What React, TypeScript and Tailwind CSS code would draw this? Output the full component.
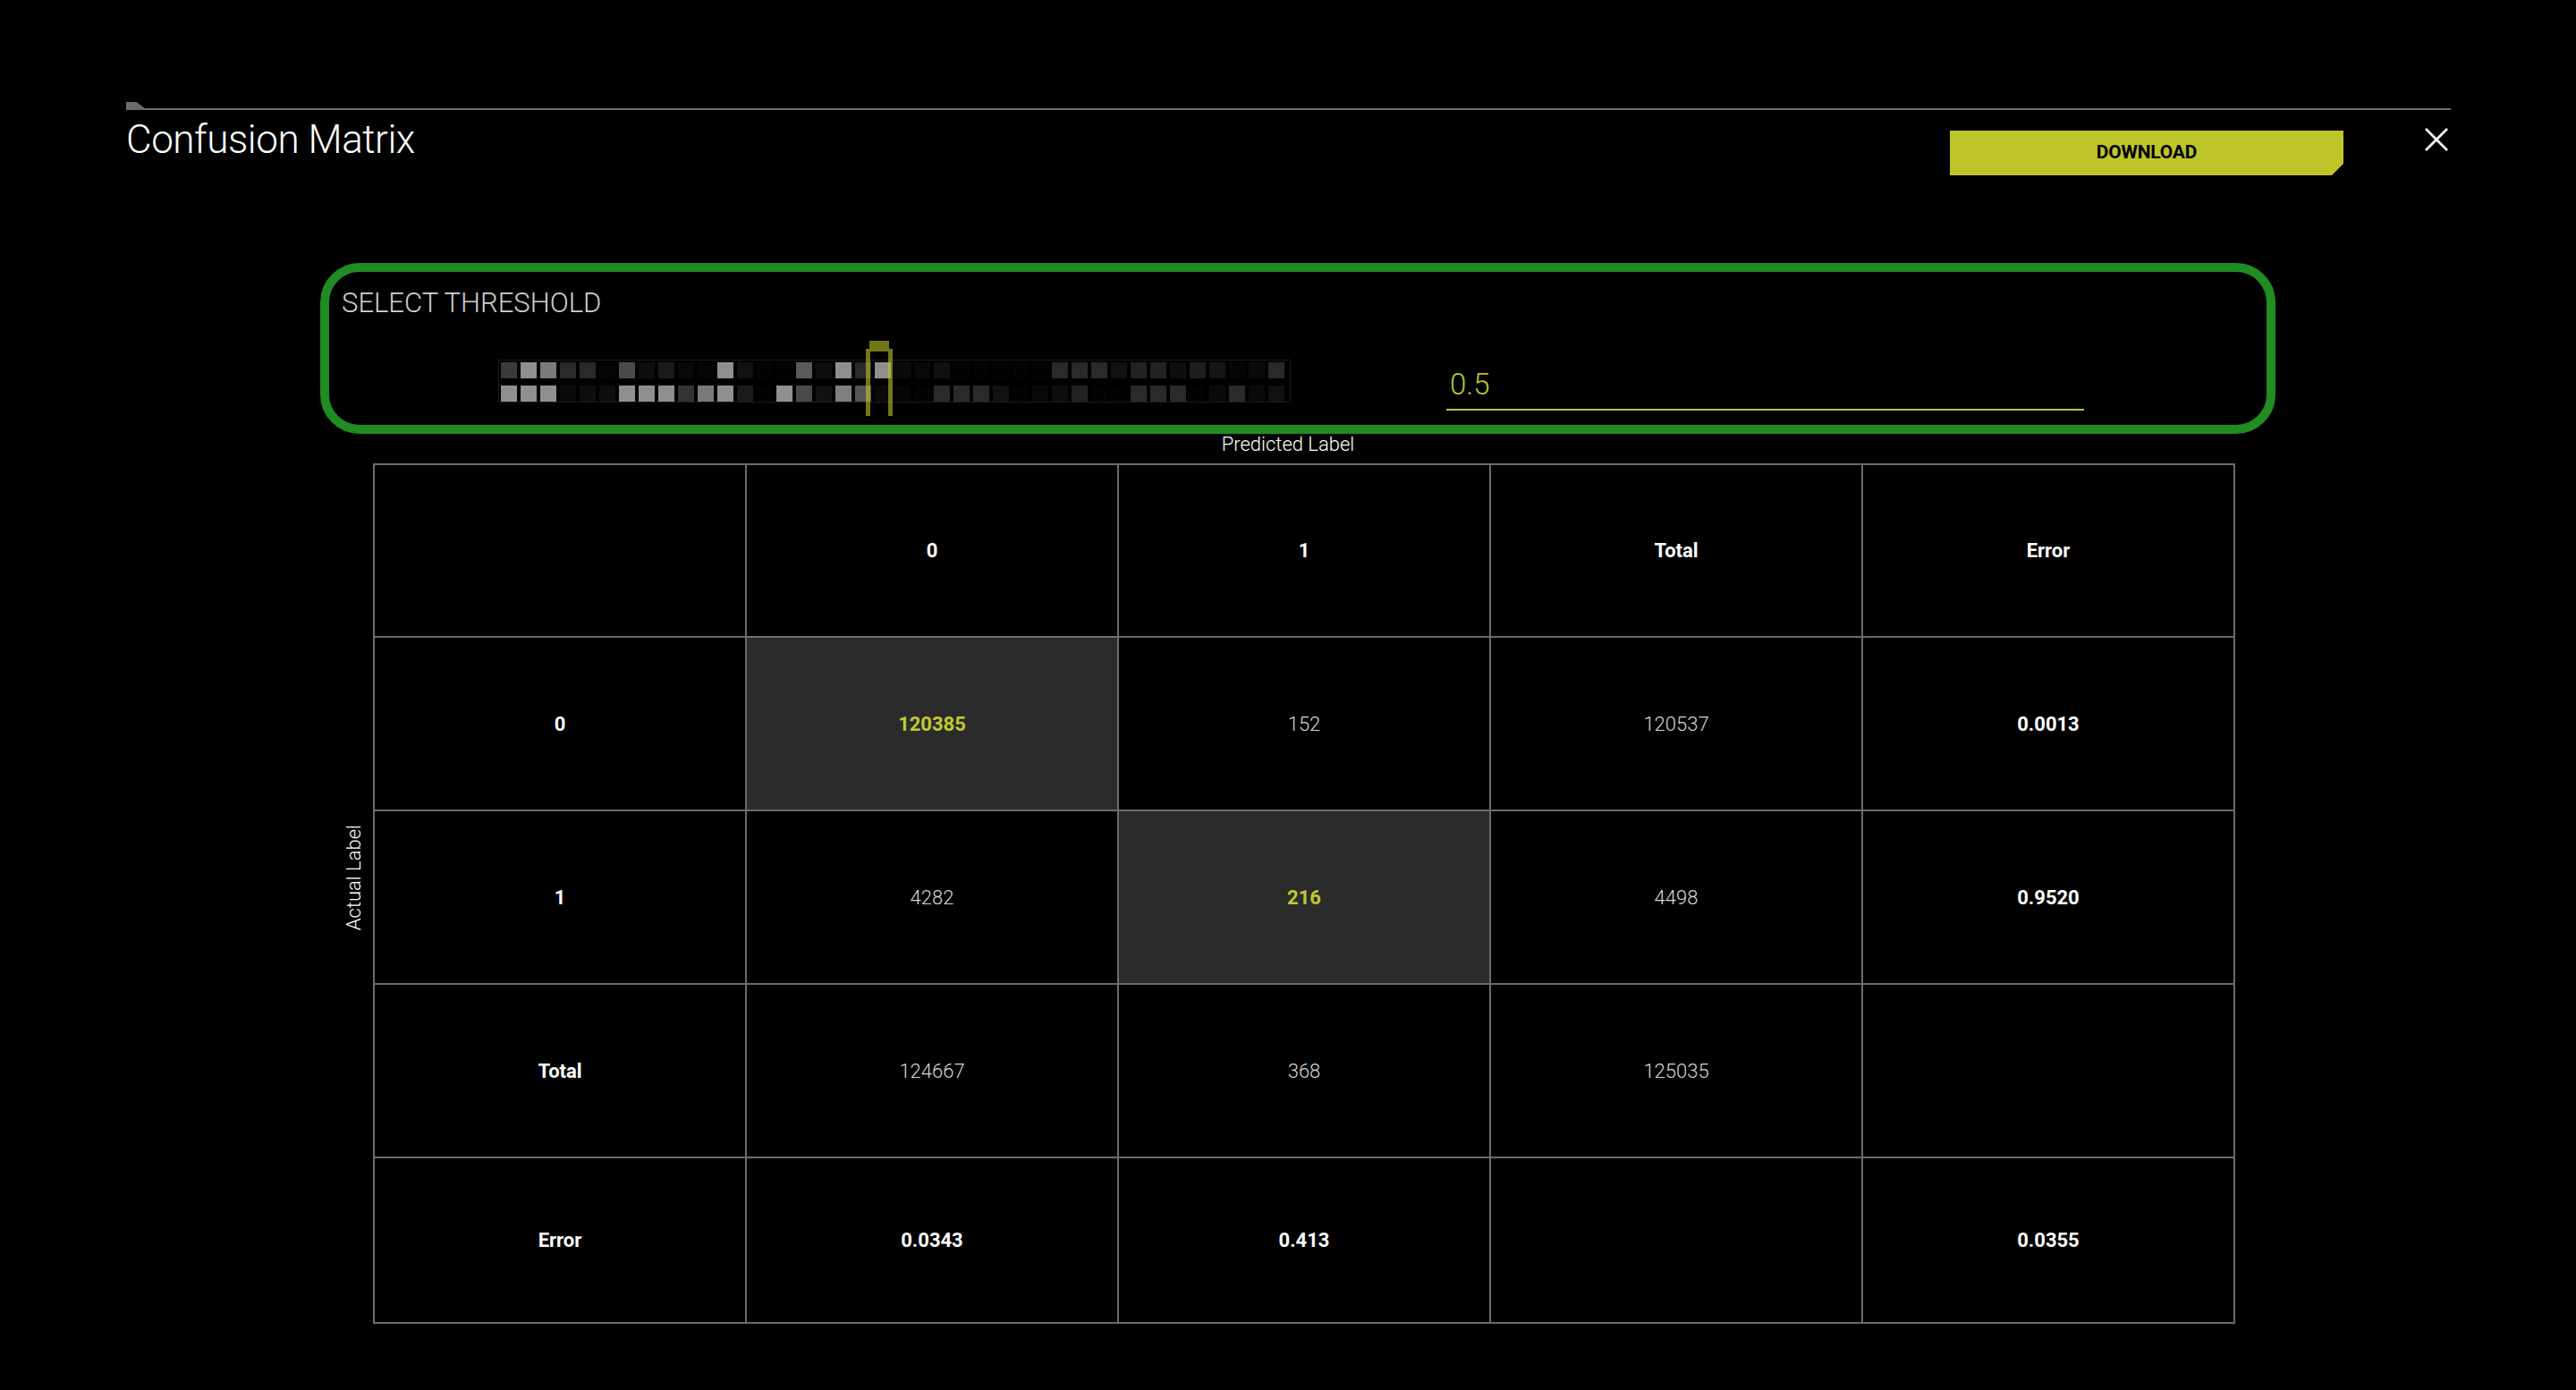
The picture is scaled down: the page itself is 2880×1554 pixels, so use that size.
import React from "react"

// intensity of each histogram bin, two rows of 40
const topBins = [
  "#3a3a3a", "#8f8f8f", "#7a7a7a", "#2a2a2a", "#2a2a2a", "#050505", "#4a4a4a", "#0e0e0e", "#1a1a1a", "#080808",
  "#050505", "#8f8f8f", "#111111", "#030303", "#030303", "#5a5a5a", "#0e0e0e", "#8f8f8f", "#2a2a2a", "#8f8f8f",
  "#0a0a0a", "#080808", "#101010", "#030303", "#030303", "#030303", "#030303", "#030303", "#2a2a2a", "#2a2a2a",
  "#2a2a2a", "#111111", "#222222", "#222222", "#0e0e0e", "#1e1e1e", "#151515", "#050505", "#0a0a0a", "#2a2a2a",
]

const bottomBins = [
  "#8f8f8f", "#8f8f8f", "#8f8f8f", "#0a0a0a", "#0e0e0e", "#0e0e0e", "#8f8f8f", "#8f8f8f", "#8f8f8f", "#333333",
  "#7a7a7a", "#8f8f8f", "#1a1a1a", "#030303", "#8f8f8f", "#4a4a4a", "#111111", "#7f7f7f", "#555555", "#0a0a0a",
  "#050505", "#030303", "#2a2a2a", "#2a2a2a", "#2a2a2a", "#111111", "#030303", "#080808", "#0e0e0e", "#222222",
  "#030303", "#030303", "#2a2a2a", "#2a2a2a", "#2a2a2a", "#030303", "#0a0a0a", "#2a2a2a", "#0a0a0a", "#111111",
]

type Cell = { t: string; kind?: "bold" | "hl" | "plain" }

const rows: Cell[][] = [
  [{ t: "" }, { t: "0", kind: "bold" }, { t: "1", kind: "bold" }, { t: "Total", kind: "bold" }, { t: "Error", kind: "bold" }],
  [{ t: "0", kind: "bold" }, { t: "120385", kind: "hl" }, { t: "152" }, { t: "120537" }, { t: "0.0013", kind: "bold" }],
  [{ t: "1", kind: "bold" }, { t: "4282" }, { t: "216", kind: "hl" }, { t: "4498" }, { t: "0.9520", kind: "bold" }],
  [{ t: "Total", kind: "bold" }, { t: "124667" }, { t: "368" }, { t: "125035" }, { t: "" }],
  [{ t: "Error", kind: "bold" }, { t: "0.0343", kind: "bold" }, { t: "0.413", kind: "bold" }, { t: "" }, { t: "0.0355", kind: "bold" }],
]

function Histogram() {
  return (
    <div className="relative pt-[21px]">
      <div className="flex flex-col gap-[8px] border border-[#1c1c1c] pl-[2px] pr-[6px] pt-[2px]">
        {[topBins, bottomBins].map((bins, r) => (
          <div key={r} className="flex gap-[4px]">
            {bins.map((c, i) => (
              <div key={i} className="h-[18px] w-[18px]" style={{ backgroundColor: c }} />
            ))}
          </div>
        ))}
      </div>

      {/* threshold handle */}
      <div className="absolute left-[415px] top-0 h-[9px] w-[22px] bg-[#bec62b]/60" />
      <div className="absolute left-[411px] top-[9px] h-[3px] w-[30px] bg-[#bec62b]/60" />
      <div className="absolute left-[411px] top-[12px] h-[72px] w-[5px] bg-[#bec62b]/60" />
      <div className="absolute left-[436px] top-[12px] h-[72px] w-[5px] bg-[#bec62b]/60" />
    </div>
  )
}

function cellText(kind?: Cell["kind"]) {
  if (kind === "hl") return "font-bold text-[#c2c92f]"
  if (kind === "bold") return "font-bold text-white"
  return "font-light text-[#d6d6d6]"
}

export default function App() {
  return (
    <div className="min-h-screen w-full bg-black font-['Roboto',sans-serif] text-white">
      <div className="px-[141px] pt-[114px]">
        {/* top rule with tab */}
        <div className="w-[2599px]">
          <div className="h-[7px] w-[21px] bg-[#6b6b6b] [clip-path:polygon(0_0,55%_0,100%_100%,0_100%)]" />
          <div className="h-[2px] bg-[#6b6b6b]" />
        </div>

        {/* header */}
        <div className="flex w-[2599px] items-start justify-between">
          <h1 className="mt-[11px] text-[44px] font-light leading-none tracking-[-0.01em] text-white">
            Confusion Matrix
          </h1>
          <div className="flex items-start pr-[3px]">
            <button
              type="button"
              className="mt-[23px] flex h-[50px] w-[440px] items-center justify-center bg-[#bec52b] text-[21px] font-bold tracking-[-0.01em] text-black [clip-path:polygon(0_0,100%_0,100%_calc(100%_-_13px),calc(100%_-_13px)_100%,0_100%)]"
            >
              DOWNLOAD
            </button>
            <button type="button" className="ml-[91px] mt-[20px] h-[26px] w-[26px] text-white">
              <svg viewBox="0 0 26 26" className="h-[26px] w-[26px]" fill="none" stroke="currentColor" strokeWidth="2.6">
                <line x1="1" y1="1" x2="25" y2="25" />
                <line x1="25" y1="1" x2="1" y2="25" />
              </svg>
            </button>
          </div>
        </div>

        {/* threshold selector */}
        <div className="ml-[217px] mt-[98px] w-[2186px] rounded-[44px] border-[10px] border-[#208c22] pb-[16px] pl-[14px] pt-[19px]">
          <div className="text-[31px] font-light leading-none text-[#d0d0d0]">SELECT THRESHOLD</div>
          <div className="mt-[27px] flex items-start">
            <div className="ml-[175px]">
              <Histogram />
            </div>
            <div className="ml-[174px] mt-[32px] w-[713px] border-b-2 border-[#bcc23e] pb-[11px] pl-[4px] text-[33px] font-light leading-none text-[#bec62b]">
              0.5
            </div>
          </div>
        </div>

        {/* matrix */}
        <div className="ml-[276px] mt-px w-[2082px] pr-[36px] text-center text-[22px] font-light leading-none text-white">
          Predicted Label
        </div>

        <div className="ml-[244px] mt-[10px] flex">
          <div className="flex w-[22px] items-center">
            <span className="mb-[36px] rotate-180 text-[22px] font-light leading-[22px] text-white [writing-mode:vertical-rl]">
              Actual Label
            </span>
          </div>
          <div className="ml-[10px] grid w-[2082px] grid-cols-5 grid-rows-[193px_194px_194px_194px_185px] border-l-2 border-t-2 border-[#6b6b6b]">
            {rows.map((row, r) =>
              row.map((c, i) => (
                <div
                  key={`${r}-${i}`}
                  className={`flex items-center justify-center border-b-2 border-r-2 border-[#6b6b6b] text-[22px] ${
                    c.kind === "hl" ? "bg-[#2b2b2b]" : ""
                  } ${cellText(c.kind)}`}
                >
                  {c.t}
                </div>
              ))
            )}
          </div>
        </div>
      </div>
    </div>
  )
}
